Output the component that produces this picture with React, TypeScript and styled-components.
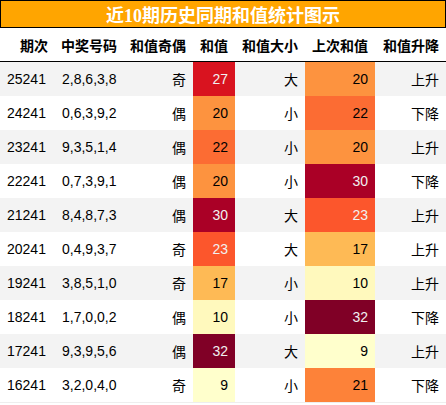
import styled, { createGlobalStyle } from 'styled-components'

const GlobalStyle = createGlobalStyle`
  html, body {
    margin: 0;
    padding: 0;
    background: #ffffff;
  }
`

type Row = {
  issue: string,
  numbers: string,
  parity: string,
  sum: number,
  size: string,
  lastSum: number,
  trend: string,
}

const rows: Row[] = [
  { issue: '25241', numbers: '2,8,6,3,8', parity: '奇', sum: 27, size: '大', lastSum: 20, trend: '上升' },
  { issue: '24241', numbers: '0,6,3,9,2', parity: '偶', sum: 20, size: '小', lastSum: 22, trend: '下降' },
  { issue: '23241', numbers: '9,3,5,1,4', parity: '偶', sum: 22, size: '小', lastSum: 20, trend: '上升' },
  { issue: '22241', numbers: '0,7,3,9,1', parity: '偶', sum: 20, size: '小', lastSum: 30, trend: '下降' },
  { issue: '21241', numbers: '8,4,8,7,3', parity: '偶', sum: 30, size: '大', lastSum: 23, trend: '上升' },
  { issue: '20241', numbers: '0,4,9,3,7', parity: '奇', sum: 23, size: '大', lastSum: 17, trend: '上升' },
  { issue: '19241', numbers: '3,8,5,1,0', parity: '奇', sum: 17, size: '小', lastSum: 10, trend: '上升' },
  { issue: '18241', numbers: '1,7,0,0,2', parity: '偶', sum: 10, size: '小', lastSum: 32, trend: '下降' },
  { issue: '17241', numbers: '9,3,9,5,6', parity: '偶', sum: 32, size: '大', lastSum: 9, trend: '上升' },
  { issue: '16241', numbers: '3,2,0,4,0', parity: '奇', sum: 9, size: '小', lastSum: 21, trend: '下降' },
]

// YlOrRd stops, like the matplotlib colormap
const stops: [number, number, number][] = [
  [255, 255, 204],
  [255, 237, 160],
  [254, 217, 118],
  [254, 178, 76],
  [253, 141, 60],
  [252, 78, 42],
  [227, 26, 28],
  [189, 0, 38],
  [128, 0, 38],
]

function heat(value: number, min: number, max: number) {
  const t = Math.min(1, Math.max(0, (value - min) / (max - min)))
  const pos = t * (stops.length - 1)
  const i = Math.min(stops.length - 2, Math.floor(pos))
  const f = pos - i
  const c = stops[i].map((a, k) => Math.round(a + (stops[i + 1][k] - a) * f))
  const lum = (0.299 * c[0] + 0.587 * c[1] + 0.114 * c[2]) / 255
  return { bg: `rgb(${c[0]}, ${c[1]}, ${c[2]})`, fg: lum < 0.55 ? '#f1f1f1' : '#000000' }
}

const columns = '55px 69px 69px 42px 70px 70px 71px'

const Page = styled.div`
  width: 446px;
  font-family: "Liberation Sans", "Noto Sans CJK SC", sans-serif;
  color: #000;
`

const Title = styled.div`
  height: 26px;
  border: 1px solid #000;
  background: #ffa500;
  color: #ffffff;
  display: flex;
  align-items: center;
  justify-content: center;
  font-family: "Liberation Serif", "Noto Sans CJK SC", serif;
  font-size: 18px;
  font-weight: bold;
`

const Grid = styled.div`
  display: grid;
  grid-template-columns: ${columns};
  border-bottom: 1px solid #eeeeee;
`

const HeadCell = styled.div`
  height: 34px;
  box-sizing: border-box;
  padding: 0 7px 6px;
  display: flex;
  align-items: flex-end;
  justify-content: flex-end;
  font-size: 14px;
  font-weight: bold;
  white-space: nowrap;
  border-bottom: 1px solid #000;
`

const Cell = styled.div<{ $striped: boolean, $align?: 'left' | 'right' }>`
  height: 34px;
  box-sizing: border-box;
  padding: 0 7px;
  display: flex;
  align-items: center;
  justify-content: ${p => (p.$align === 'left' ? 'flex-start' : 'flex-end')};
  font-size: 14px;
  white-space: nowrap;
  background: ${p => (p.$striped ? '#f3f3f3' : '#ffffff')};
`

const HeatCell = styled.div<{ $bg: string, $fg: string }>`
  height: 34px;
  box-sizing: border-box;
  padding: 0 7px;
  display: flex;
  align-items: center;
  justify-content: flex-end;
  font-size: 14px;
  background: ${p => p.$bg};
  color: ${p => p.$fg};
`

const headers = ['期次', '中奖号码', '和值奇偶', '和值', '和值大小', '上次和值', '和值升降']

export default function App() {
  return (
    <Page>
      <GlobalStyle />
      <Title>近10期历史同期和值统计图示</Title>
      <Grid>
        {headers.map(h => <HeadCell key={h}>{h}</HeadCell>)}
        {rows.map((r, i) => {
          const striped = i % 2 === 0
          const s = heat(r.sum, 9, 32)
          const l = heat(r.lastSum, 9, 32)
          return [
            <Cell key={`${r.issue}-a`} $striped={striped} $align="left">{r.issue}</Cell>,
            <Cell key={`${r.issue}-b`} $striped={striped} $align="left">{r.numbers}</Cell>,
            <Cell key={`${r.issue}-c`} $striped={striped}>{r.parity}</Cell>,
            <HeatCell key={`${r.issue}-d`} $bg={s.bg} $fg={s.fg}>{r.sum}</HeatCell>,
            <Cell key={`${r.issue}-e`} $striped={striped}>{r.size}</Cell>,
            <HeatCell key={`${r.issue}-f`} $bg={l.bg} $fg={l.fg}>{r.lastSum}</HeatCell>,
            <Cell key={`${r.issue}-g`} $striped={striped}>{r.trend}</Cell>,
          ]
        })}
      </Grid>
    </Page>
  )
}
